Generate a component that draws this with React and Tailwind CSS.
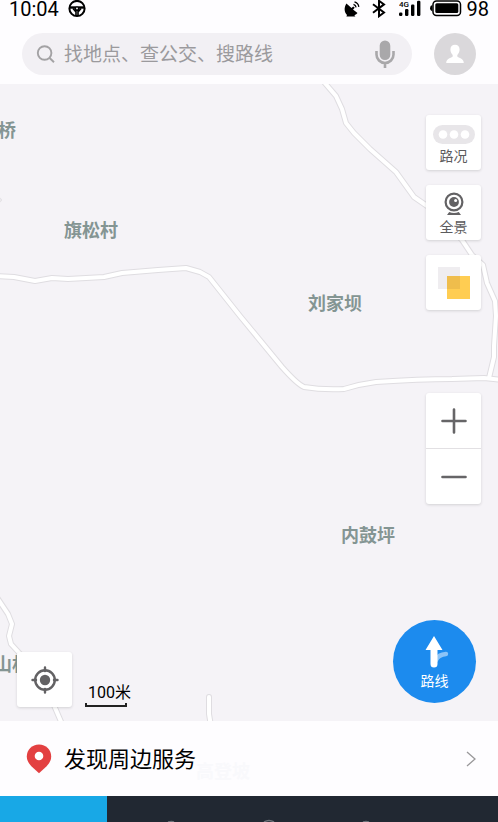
import { useState } from "react";

const roads = [
  "M324 -2 L336 12 L342 25 L346 39 L354 49 L370 65 L396 88 L414 113 L430 124 L462 156 L472 171 L483 181 L487 199 L495 217 L496 232 L494 262 L494 273 L489 294",
  "M-4 192 L14 193 L35 197 L52 194 L68 195 L104 193 L122 189 L158 186 L186 184 L200 188 L209 193 L240 232 L282 283 Q297 300 304 303 Q322 306 344 305 Q360 300 376 298 Q420 295 452 295 L484 294 L502 296",
  "M-4 512 L8 530 L12 540 L9 552 L11 560 L22 572 L50 612 L62 640",
  "M209 613 L209 630 L211 642",
];

const places = [
  { name: "陈家桥", className: "-left-[38px] top-[33px]" },
  { name: "旗松村", className: "left-[64px] top-[133px]" },
  { name: "刘家坝", className: "left-[308px] top-[206px]" },
  { name: "内鼓坪", className: "left-[341px] top-[438px]" },
  { name: "山村", className: "-left-[6px] top-[567px]" },
];

function StatusBar() {
  return (
    <div className="flex h-[18px] items-center justify-between px-[9px] text-[20px] leading-[18px] text-black">
      <div className="flex items-center gap-[9px]">
        <span>10:04</span>
        <svg className="h-[18px] w-[18px]" viewBox="0 0 18 18" fill="none" stroke="currentColor">
          <circle cx="9" cy="8.5" r="7.6" strokeWidth="2" />
          <path d="M2 7.5h14" strokeWidth="2.4" />
          <path d="M5 8.5l3 3.5v4M13 8.5l-3 3.5v4" strokeWidth="1.6" />
          <circle cx="9" cy="9" r="2.6" fill="currentColor" stroke="none" />
          <circle cx="9" cy="8.4" r="0.9" fill="#fff" stroke="none" />
        </svg>
      </div>
      <div className="flex items-center">
        <svg className="h-[18px] w-[16px]" viewBox="0 0 16 18" fill="currentColor">
          <path d="M2.4 3.4C-.4 8 .4 12.500 3 15l-.6 1.400h9l-1-1.200c1.400-.5 2.400-1.200 3.100-2.200L9 9.600l1.800-1.800-1.600-1.400-1.700 1.700z" />
          <path d="M9.5 4.400a3.600 3.600 0 0 1 2.600 3M10.500 1.800a6 6 0 0 1 4.300 5" fill="none" stroke="currentColor" strokeWidth="1.3" />
        </svg>
        <svg className="ml-[12px] h-[18px] w-[14px]" viewBox="0 0 14 18" fill="none" stroke="currentColor" strokeWidth="2">
          <path d="M1 4.300l11 8.200-5 3.700V0.800l5 3.600L1 12.800" />
        </svg>
        <svg className="ml-[13px] h-[18px] w-[22px]" viewBox="0 0 22 18" fill="currentColor">
          <rect x="0" y="12.6" width="3.4" height="3.4" rx="1.2" />
          <rect x="6" y="9" width="3.4" height="7" rx="1.2" />
          <rect x="12" y="4.500" width="3.4" height="11.500" rx="1.2" />
          <rect x="18" y="0.800" width="3.4" height="15.200" rx="1.2" />
          <text x="0" y="6.500" fontSize="8" fontWeight="500">4G</text>
        </svg>
        <svg className="ml-[9px] h-[18px] w-[32px]" viewBox="0 0 32 18">
          <rect x="3" y="1" width="27.5" height="14.400" rx="3.500" fill="none" stroke="currentColor" strokeWidth="1.500" />
          <path d="M2.4 5v6.600Q0 11 0 8.300T2.400 5z" fill="currentColor" />
          <rect x="5.300" y="3.300" width="23" height="9.800" rx="1.500" fill="currentColor" />
        </svg>
        <span className="ml-[5px]">98</span>
      </div>
    </div>
  );
}

function SearchBar() {
  const [query, setQuery] = useState("");

  return (
    <div className="mt-[15px] flex items-center gap-[22px] px-[22px]">
      <form onSubmit={(e) => e.preventDefault()} className="flex h-[42px] min-w-0 flex-1 items-center rounded-full bg-[#f2f0f4] pl-[14px] pr-[16px]">
        <svg className="h-[20px] w-[20px] shrink-0" viewBox="0 0 20 20" fill="none" stroke="#a3a2a4" strokeWidth="1.9">
          <circle cx="8.6" cy="9" r="6.8" />
          <path d="M13.4 13.8L18 18.2" />
        </svg>
        <input
          type="text"
          aria-label="搜索"
          value={query}
          onChange={(e) => setQuery(e.target.value)}
          placeholder="找地点、查公交、搜路线"
          className="ml-[8px] min-w-0 flex-1 bg-transparent pt-[2px] text-[19px] text-gray-800 outline-none placeholder:text-[#9b9a9d]"
        />
        <button type="button" aria-label="语音搜索">
          <svg className="h-[30px] w-[22px]" viewBox="0 0 22 30">
            <rect x="5.7" y="1.5" width="10.6" height="19.5" rx="5.3" fill="#a9a8aa" />
            <path d="M2.500 12v3.500a8.500 8.500 0 0 0 17 0V12M11 24v5" fill="none" stroke="#a9a8aa" strokeWidth="2.6" />
          </svg>
        </button>
      </form>
      <button type="button" aria-label="我的" className="flex h-[42px] w-[42px] shrink-0 items-center justify-center rounded-full bg-[#dad8db]">
        <svg className="h-[20px] w-[18px]" viewBox="0 0 18 20" fill="#fff">
          <path d="M9 .8c2.900 0 4.600 2 4.600 4.800 0 2.200-.9 4.300-2.300 5.300v1.600c0 1 6.500 1.600 6.500 6.500H.2c0-4.900 6.500-5.500 6.500-6.500v-1.600C5.300 9.900 4.400 7.800 4.400 5.600 4.400 2.800 6.100.8 9 .8z" />
        </svg>
      </button>
    </div>
  );
}

function MapButton({ label, text, children }) {
  return (
    <button
      type="button"
      aria-label={label}
      className="flex h-[55px] w-[55px] flex-col items-center justify-center rounded-[3px] bg-white text-[14px] leading-[18px] text-[#5c5b5d] shadow-[0_1px_3px_rgba(0,0,0,0.14)]"
    >
      {children}
      {text && <span>{text}</span>}
    </button>
  );
}

function MapView() {
  return (
    <main className="relative min-h-[637px] flex-1 overflow-hidden bg-[#f5f3f7]">
      <svg className="absolute left-0 top-0 h-[637px] w-[498px]" viewBox="0 0 498 637" fill="none" strokeLinejoin="round" strokeLinecap="round">
        {roads.map((d) => (
          <path key={d} d={d} stroke="#dfdde1" strokeWidth="6" />
        ))}
        {roads.map((d) => (
          <path key={d} d={d} stroke="#fff" strokeWidth="4" />
        ))}
        <circle cx="-1" cy="116" r="2.2" fill="#fff" stroke="#dfdde1" />
      </svg>

      {/* place names */}
      {places.map((place) => (
        <span key={place.name} className={`absolute whitespace-nowrap text-[18px] font-bold leading-[27px] text-[#849593] ${place.className}`}>
          {place.name}
        </span>
      ))}

      {/* right column */}
      <div className="absolute right-[17px] top-[31px] flex flex-col gap-[15px]">
        <MapButton label="路况" text="路况">
          <svg className="mb-[3px] mt-[5px] h-[19px] w-[42px]" viewBox="0 0 42 19">
            <rect width="42" height="19" rx="9.5" fill="#e8e6e9" />
            <circle cx="10" cy="9.5" r="4.3" fill="#fff" />
            <circle cx="21" cy="9.5" r="4.3" fill="#fff" />
            <circle cx="32" cy="9.5" r="4.3" fill="#fff" />
          </svg>
        </MapButton>
        <MapButton label="全景" text="全景">
          <svg className="mb-[2px] mt-[3px] h-[24px] w-[20px]" viewBox="0 0 20 24" fill="none" stroke="#636264">
            <circle cx="10" cy="10" r="8.4" strokeWidth="2.2" />
            <circle cx="10" cy="10" r="4.9" fill="#636264" stroke="none" />
            <circle cx="11.6" cy="8.5" r="1.5" fill="#fff" stroke="none" />
            <path d="M5.2 20Q10 22 14.8 20L17 23H3z" fill="#636264" stroke="none" />
          </svg>
        </MapButton>
        <MapButton label="图层">
          <svg className="h-[32px] w-[32px]" viewBox="0 0 32 32">
            <rect width="22" height="22" fill="#efedf0" />
            <rect x="9" y="9" width="23" height="23" fill="#ffcd52" />
            <rect x="9" y="9" width="13" height="13" fill="#efbd4c" />
          </svg>
        </MapButton>
      </div>

      {/* zoom */}
      <div className="absolute right-[17px] top-[309px] flex w-[55px] flex-col divide-y divide-[#e2e0e3] rounded-[3px] bg-white shadow-[0_1px_3px_rgba(0,0,0,0.14)]">
        <button type="button" aria-label="放大" className="flex h-[56px] items-center justify-center">
          <svg className="h-[26px] w-[26px]" viewBox="0 0 26 26" stroke="#666567" strokeWidth="2.6" strokeLinecap="round">
            <path d="M1.5 13h23M13 1.5v23" />
          </svg>
        </button>
        <button type="button" aria-label="缩小" className="flex h-[55px] items-center justify-center">
          <svg className="h-[26px] w-[26px]" viewBox="0 0 26 26" stroke="#666567" strokeWidth="2.6" strokeLinecap="round">
            <path d="M1.5 13h23" />
          </svg>
        </button>
      </div>

      {/* location + scale */}
      <div className="absolute bottom-[14px] left-[17px] flex items-end gap-[13px]">
        <MapButton label="定位">
          <svg className="h-[28px] w-[28px]" viewBox="0 0 28 28" fill="none" stroke="#636264">
            <circle cx="14" cy="14" r="9.8" strokeWidth="2.4" />
            <circle cx="14" cy="14" r="5.2" fill="#636264" stroke="none" />
            <path d="M14 1.5V5M14 23v3.5M1.5 14H5M23 14h3.5" strokeWidth="2.4" strokeLinecap="round" />
          </svg>
        </MapButton>
        <div className="text-[16px] leading-[20px] text-black">
          <span className="block pl-[3px]">100米</span>
          <span className="block h-[4px] w-[42px] border-2 border-t-0 border-[#222]" />
        </div>
      </div>

      {/* route */}
      <button type="button" className="absolute bottom-[18px] right-[22px] flex h-[83px] w-[83px] flex-col items-center rounded-full bg-[#1c8bee] pt-[16px] text-[14px] leading-[18px] text-white">
        <svg className="mb-[4px] h-[32px] w-[32px]" viewBox="0 0 32 32">
          <path d="M17 24Q19.500 18.500 27 18" fill="none" stroke="#8cc4f7" strokeWidth="4.4" strokeLinecap="round" />
          <path d="M15 0L23.500 14H18.500V28a3.500 3.500 0 0 1-7 0V14H6.500z" fill="#fff" />
        </svg>
        路线
      </button>
    </main>
  );
}

export default function App() {
  return (
    <div className="flex min-h-screen flex-col overflow-hidden bg-[#fefdff] font-[Roboto,'Noto_Sans_CJK_SC',sans-serif]">
      <header className="h-[84px]">
        <StatusBar />
        <SearchBar />
      </header>

      <MapView />

      <button type="button" className="relative flex h-[75px] items-center bg-[#fefdff] pl-[26px] pr-[22px] text-left">
        <svg className="h-[30px] w-[26px]" viewBox="0 0 26 30">
          <path d="M13 .5C6 .5.8 5.800.8 12.500c0 5 3 8.200 6.200 11.300L13 29.300l6-5.500c3.200-3.100 6.200-6.300 6.200-11.300C25.200 5.800 20 .5 13 .5z" fill="#e34041" />
          <circle cx="13" cy="12" r="4.3" fill="#fff" />
        </svg>
        <span className="ml-[12px] flex-1 pt-[2px] text-[22px] leading-[30px] text-black">发现周边服务</span>
        <svg className="h-[16px] w-[10px]" viewBox="0 0 10 16" fill="none" stroke="#99989a" strokeWidth="1.3">
          <path d="M1 1l8 7-8 7" />
        </svg>
        <span className="absolute left-[196px] top-[37px] text-[18px] font-bold leading-[27px] text-[#f9f9fc]">高登坡</span>
      </button>

      <nav className="flex h-[26px] bg-[#212832]">
        <div className="w-[107px] bg-[#18a8e6]" />
        <svg className="h-[26px] flex-1" viewBox="0 0 391 26" preserveAspectRatio="xMinYMin meet" fill="none" stroke="#6b7178" strokeWidth="1.5">
          <path d="M61 26q4-1 6 0M157 26q5-3 10 0M256 26q3-1 6 0" />
        </svg>
      </nav>
    </div>
  );
}
